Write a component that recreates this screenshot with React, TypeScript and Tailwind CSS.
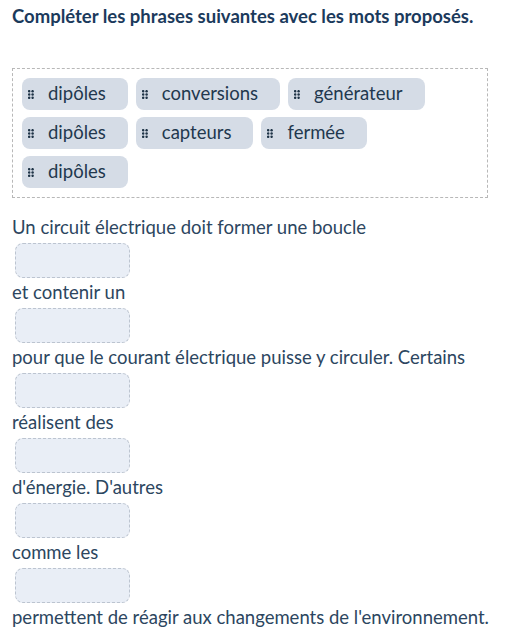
import React from "react";

const words = ["dipôles", "conversions", "générateur", "dipôles", "capteurs", "fermée", "dipôles"];

const segments = [
  "Un circuit électrique doit former une boucle",
  "et contenir un",
  "pour que le courant électrique puisse y circuler. Certains",
  "réalisent des",
  "d'énergie. D'autres",
  "comme les",
  "permettent de réagir aux changements de l'environnement.",
];

function DragHandle() {
  return (
    <svg width="6" height="9" viewBox="0 0 6 9" className="shrink-0">
      {[1.2, 4.5, 7.8].map((y) =>
        [1.2, 4.6].map((x) => <circle key={`${x}-${y}`} cx={x} cy={y} r="1.25" fill="#1f3447" />)
      )}
    </svg>
  );
}

export default function App() {
  return (
    <div className="min-h-screen bg-white px-3 pt-1 font-['Lato',sans-serif]">
      <h1 className="text-[18.5px] leading-6 font-bold text-[#1b3a5c]">
        Compléter les phrases suivantes avec les mots proposés.
      </h1>

      {/* word bank */}
      <div className="mt-10 w-[476px] border border-dashed border-[#b8b8b8] p-[9px]">
        <div className="flex flex-wrap gap-x-2 gap-y-[7px]">
          {words.map((w, i) => (
            <div
              key={i}
              className="flex h-8 items-center rounded-lg bg-[#d5dce6] pl-[6px] pr-[22px] text-[18.5px] text-[#22384e]"
            >
              <DragHandle />
              <span className="ml-[14px]">{w}</span>
            </div>
          ))}
        </div>
      </div>

      {/* sentences with drop zones */}
      <div className="mt-[17px] text-[18.5px] text-[#2c4660]">
        {segments.map((s, i) => (
          <div key={i}>
            <p className="leading-6">{s}</p>
            {i < segments.length - 1 && (
              <div className="mt-1 mb-[2px] ml-[3px] h-[35px] w-[115px] rounded-lg border border-dashed border-[#bcc4d0] bg-[#e9eef6]" />
            )}
          </div>
        ))}
      </div>
    </div>
  );
}
